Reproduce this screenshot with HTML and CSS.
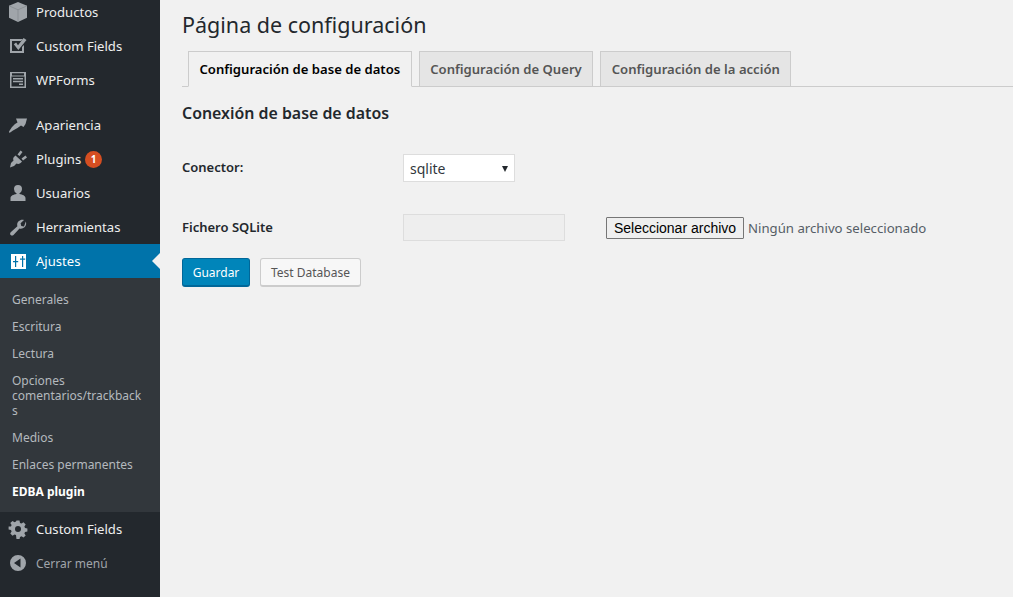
FILE: index.html
```html
<!DOCTYPE html>
<html lang="es">
<head>
<meta charset="utf-8">
<title>Página de configuración</title>
<link rel="stylesheet" href="styles.css">
</head>
<body>
<div class="layout">
  <nav class="sidebar">
    <ul class="menu">
      <li class="item"><svg class="icon" viewBox="0 0 20 20"><path d="M10 0l9 3.800v12L10 20l-9-4.200v-12z"/><path class="seam" d="M1 3.800l9 4 9-4M10 7.800V20"/></svg><span>Productos</span></li>
      <li class="item"><svg class="icon" viewBox="0 0 20 20"><path fill-rule="evenodd" d="M2 3h13l-2 2H4v10h10v-4l2-2v8H2z"/><path d="M5.800 8.300l2.300-1.800 1.900 2.700L15.600 2 18.500 4 10.300 14z"/></svg><span>Custom Fields</span></li>
      <li class="item"><svg class="icon" viewBox="0 0 20 20"><path fill-rule="evenodd" d="M2 2h16v16H2zM3.500 6.500v10h13v-10zM4 3.200v2.300h12V3.200z"/><path d="M5 8h10v1.400H5zM5 10.800h10v1.400H5zM11 13.500h4v1.600h-4z"/></svg><span>WPForms</span></li>
      <li class="item gap"><svg class="icon" viewBox="0 0 20 20"><path d="M8 3.500L19 3.500 17.500 9 15.500 12 13 10.500 9.500 13 5 15.500 1.500 18 1 16.500 4 12 7 9 9.500 7.500z"/></svg><span>Apariencia</span></li>
      <li class="item"><svg class="icon" viewBox="0 0 20 20"><path d="M12.500 1.500l2 1.500-3 4-2-1.500zM17.500 6.500L19 8.500l-4 3-1.500-2z"/><path d="M7.500 6.500L14 12.500c-1.500 2-3.500 3-5.500 2L6 17l-4 1.500L3 14l2.500-2.500c-1-2 0-3.500 2-5z"/></svg><span>Plugins</span><span class="badge">1</span></li>
      <li class="item"><svg class="icon" viewBox="0 0 20 20"><path d="M10 2a4 4 0 0 1 4 4c0 1.800-1 3.500-2.500 4.300V11c3 .5 6 1.800 6 4v3h-15v-3c0-2.200 3-3.500 6-4v-.7A5 5 0 0 1 6 6a4 4 0 0 1 4-4z"/></svg><span>Usuarios</span></li>
      <li class="item"><svg class="icon" viewBox="0 0 20 20"><path d="M17.800 4.500c.8 2 .3 4.300-1.300 5.800-1.400 1.300-3.300 1.800-5 1.200L5.500 18c-.8.800-2.100.8-2.800.1-.8-.8-.8-2 0-2.800l6.700-6c-.6-1.700-.1-3.700 1.200-5 1.500-1.500 3.500-2 5.400-1.300l-3.400 3.200.7 2.700 2.700.7z"/></svg><span>Herramientas</span></li>
      <li class="item current"><svg class="icon" viewBox="0 0 20 20"><path fill-rule="evenodd" d="M3 3h15v15H3zM7 5v5H5v1.300h2V16h1.200v-4.700h2V10h-2V5zM14 5v2.500h-2v1.300h2V16h1.200V8.800h2V7.500h-2V5z"/></svg><span>Ajustes</span></li>
      <li>
        <ul class="submenu">
          <li>Generales</li>
          <li>Escritura</li>
          <li>Lectura</li>
          <li>Opciones comentarios/trackbacks</li>
          <li>Medios</li>
          <li>Enlaces permanentes</li>
          <li class="sub-current">EDBA plugin</li>
        </ul>
      </li>
      <li class="item"><svg class="icon" viewBox="0 0 20 20"><path fill-rule="evenodd" d="M8.500 1.500h3l.5 2.400 1.500.6 2-1.300 2.200 2.200-1.300 2 .6 1.500 2.400.5v3l-2.400.5-.6 1.500 1.300 2-2.200 2.200-2-1.300-1.500.6-.5 2.400h-3L8 16.100l-1.500-.6-2 1.300-2.200-2.200 1.300-2-.6-1.500-2.400-.5v-3L3 7.600l.6-1.500-1.300-2 2.200-2.200 2 1.300L8 2.600zM10 7a3 3 0 1 0 0 6 3 3 0 0 0 0-6z"/></svg><span>Custom Fields</span></li>
      <li class="item collapse"><svg class="icon" viewBox="0 0 20 20"><path fill-rule="evenodd" d="M10 2a8 8 0 1 1 0 16 8 8 0 0 1 0-16zM12.500 5.500L6 10l6.500 4.500z"/></svg><span>Cerrar menú</span></li>
    </ul>
  </nav>
  <main class="content">
    <h1 class="title">Página de configuración</h1>
    <div class="tabs">
      <a class="tab active">Configuración de base de datos</a>
      <a class="tab">Configuración de Query</a>
      <a class="tab">Configuración de la acción</a>
    </div>
    <h2 class="section">Conexión de base de datos</h2>
    <div class="row row-connector">
      <label class="label">Conector:</label>
      <div class="select"><span>sqlite</span><i class="arrow"></i></div>
    </div>
    <div class="row row-file">
      <label class="label">Fichero SQLite</label>
      <div class="readonly"></div>
      <button class="file-btn" type="button">Seleccionar archivo</button>
      <span class="file-name">Ningún archivo seleccionado</span>
    </div>
    <div class="actions">
      <button class="btn primary" type="button">Guardar</button>
      <button class="btn" type="button">Test Database</button>
    </div>
  </main>
</div>
</body>
</html>
```
FILE: styles.css
```css
* { box-sizing: border-box; }
html, body { margin: 0; height: 100%; overflow: hidden; }
body { background: #f1f1f1; color: #23282d; font-family: "Noto Sans", "Open Sans", sans-serif; font-size: 13px; }
.layout { display: flex; height: 597px; }
.sidebar { width: 160px; flex: none; background: #23282d; overflow: hidden; }
ul { list-style: none; margin: 0; padding: 0; }
.menu { margin-top: -5px; }
.item { height: 34px; display: flex; align-items: center; color: #eee; font-size: 13.100px; position: relative; }
.item.gap { margin-top: 11px; }
.icon { width: 20px; height: 20px; margin: 0 8px; fill: #a0a5aa; flex: none; }
.seam { fill: none; stroke: #83888d; stroke-width: .7; }
.badge { width: 17px; height: 17px; border-radius: 50%; background: #d54e21; color: #fff; font-size: 10px; font-weight: 700; display: flex; align-items: center; justify-content: center; margin-left: 4px; }
.current { background: #0073aa; color: #fff; }
.current .icon { fill: #fff; }
.current::after { content: ""; position: absolute; right: 0; top: 9px; border: 8px solid transparent; border-right-color: #f1f1f1; border-left-width: 0; }
.submenu { background: #32373c; padding: 8px 0 7px; color: #b4b9be; font-size: 12px; line-height: 15px; }
.submenu li { padding: 6px 18px 6px 12px; overflow-wrap: anywhere; }
.sub-current { color: #fff; font-weight: 700; }
.collapse { color: #a0a5aa; font-size: 12px; }
.content { flex: 1; min-width: 0; padding: 0 0 0 22px; }
.title { margin: 9px 0 0; font-size: 21.500px; line-height: 32px; font-weight: 400; }
.tabs { display: flex; gap: 7px; padding-left: 6px; margin-top: 10px; height: 36px; border-bottom: 1px solid #ccc; }
.tab { height: 36px; padding: 0 10.500px; background: #e5e5e5; border: 1px solid #ccc; color: #555; font-size: 13.100px; font-weight: 600; line-height: 35px; }
.tab.active { background: #f1f1f1; border-bottom-color: #f1f1f1; color: #000; }
.section { margin: 16px 0 0; font-size: 15.900px; line-height: 21px; font-weight: 600; }
.row { display: flex; align-items: flex-start; }
.row-connector { margin-top: 30px; height: 60px; }
.label { width: 221px; flex: none; font-size: 13px; font-weight: 600; line-height: 18px; }
.row-connector .label { margin-top: 4px; }
.select { width: 112px; height: 28px; background: #fff; border: 1px solid #ddd; display: flex; align-items: center; justify-content: space-between; padding: 1px 6px 0 6px; font-size: 14px; color: #32373c; }
.arrow { width: 0; height: 0; border: 3px solid transparent; border-top: 6px solid #23282d; border-bottom: 0; }
.row-file { height: 44px; }
.row-file .label { margin-top: 4px; }
.readonly { width: 162px; height: 27px; background: #eee; border: 1px solid #ddd; }
.file-btn { margin: 3px 0 0 41px; width: 138px; height: 22px; padding: 0; background: #efefef; border: 1px solid #767676; border-radius: 1px; font-family: "Liberation Sans", sans-serif; font-size: 14px; color: #000; }
.file-name { margin: 5px 0 0 4px; font-size: 13.200px; line-height: 18px; color: #555d66; }
.actions { display: flex; gap: 10px; }
.btn { height: 29px; padding: 0 10px; border: 1px solid #ccc; border-bottom-width: 2px; border-radius: 3px; background: #f7f7f7; color: #555; font: inherit; font-size: 12px; }
.primary { width: 68px; padding: 0; background: #0085ba; border-color: #006799; color: #fff; }
```
